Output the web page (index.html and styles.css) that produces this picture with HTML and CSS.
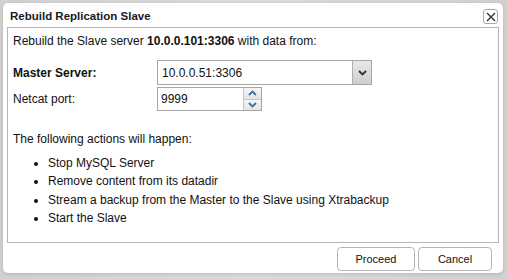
FILE: index.html
```html
<!DOCTYPE html>
<html>
<head>
    <meta name="viewport" content="width=device-width, initial-scale=1.0">
    <title>Rebuild Replication Slave</title>
    <link rel="stylesheet" href="styles.css">
</head>
<body>
    <div class="dialog">
        <div class="titlebar">
            <span class="title">Rebuild Replication Slave</span>
            <span class="close">
                <svg width="10" height="10" viewBox="0 0 10 10">
                    <path d="M1 1 L9 9 M9 1 L1 9" stroke="#333" stroke-width="1.4"/>
                </svg>
            </span>
        </div>

        <!-- main content box -->
        <div class="content">
            <p class="intro">Rebuild the Slave server <b>10.0.0.101:3306</b> with data from:</p>

            <div class="row first">
                <label class="lbl bold">Master Server:</label>
                <div class="select">
                    <span class="select-value">10.0.0.51:3306</span>
                    <span class="select-arrow">
                        <svg width="9" height="6" viewBox="0 0 9 6">
                            <path d="M1 1 L4.5 4.5 L8 1" fill="none" stroke="#333" stroke-width="1.8"/>
                        </svg>
                    </span>
                </div>
            </div>
            <div class="row">
                <label class="lbl">Netcat port:</label>
                <div class="spin">
                    <span class="spin-value">9999</span>
                    <span class="spin-btns">
                        <span class="spin-btn">
                            <svg width="9" height="6" viewBox="0 0 9 6">
                                <path d="M1 5 L4.5 1.5 L8 5" fill="none" stroke="#3a6fa8" stroke-width="1.8"/>
                            </svg>
                        </span>
                        <span class="spin-btn">
                            <svg width="9" height="6" viewBox="0 0 9 6">
                                <path d="M1 1 L4.5 4.5 L8 1" fill="none" stroke="#3a6fa8" stroke-width="1.8"/>
                            </svg>
                        </span>
                    </span>
                </div>
            </div>

            <p class="actions">The following actions will happen:</p>
            <ul class="steps">
                <li>Stop MySQL Server</li>
                <li>Remove content from its datadir</li>
                <li>Stream a backup from the Master to the Slave using Xtrabackup</li>
                <li>Start the Slave</li>
            </ul>
        </div>

        <div class="buttons">
            <button class="btn">Proceed</button>
            <button class="btn">Cancel</button>
        </div>
    </div>
</body>
</html>
```

FILE: styles.css
```css
* {
    margin: 0;
    padding: 0;
    box-sizing: border-box;
}
body {
    background: linear-gradient(90deg, #d2d2d2, #dcdcdc 50%, #d2d2d2);
    font-family: "Liberation Sans", Arial, sans-serif;
    font-size: 12px;
    color: #111;
    height: 279px;
    overflow: hidden;
}
.dialog {
    margin: 3px 4px 0 3px;
    height: 270px;
    background: #fff;
    border-radius: 5px;
    box-shadow: 0 1px 4px rgba(0, 0, 0, 0.15);
    display: flex;
    flex-direction: column;
    padding: 0 4px;
}
.titlebar {
    height: 24px;
    display: flex;
    align-items: center;
    justify-content: space-between;
    padding: 1px 0 0 3px;
}
.title {
    font-weight: bold;
    font-size: 11.5px;
    color: #1a1a1a;
}
.close {
    width: 15px;
    height: 15px;
    border: 1px solid #aaa;
    border-radius: 3px;
    display: flex;
    align-items: center;
    justify-content: center;
    margin: 2px 1px 0 0;
}
.content {
    border: 1px solid #bcb3b3;
    height: 216px;
    padding: 5px 5px 0 5px;
}
.intro {
    line-height: 16px;
}
.row {
    display: flex;
    align-items: center;
    margin-top: 2px;
}
.row.first {
    margin-top: 11px;
}
.lbl {
    width: 144px;
}
.bold {
    font-weight: bold;
}
.select {
    width: 215px;
    height: 25px;
    border: 1px solid #a6a6a6;
    display: flex;
    align-items: center;
}
.select-value {
    flex: 1;
    padding-left: 4px;
}
.select-arrow {
    width: 19px;
    height: 100%;
    background: linear-gradient(#e8e8e8, #cfcfcf);
    border-left: 1px solid #b0b0b0;
    display: flex;
    align-items: center;
    justify-content: center;
}
.spin {
    width: 105px;
    height: 24px;
    border: 1px solid #a6a6a6;
    display: flex;
    align-items: center;
}
.spin-value {
    flex: 1;
    padding-left: 3px;
}
.spin-btns {
    width: 18px;
    height: 100%;
    border-left: 1px solid #c4c4c4;
    display: flex;
    flex-direction: column;
}
.spin-btn {
    flex: 1;
    display: flex;
    align-items: center;
    justify-content: center;
    background: linear-gradient(#f6f6f6, #e4e4e4);
}
.spin-btn + .spin-btn {
    border-top: 1px solid #c4c4c4;
}
.actions {
    margin-top: 20px;
    line-height: 16px;
}
.steps {
    margin-top: 7px;
    padding-left: 35px;
    line-height: 18.3px;
}
.buttons {
    display: flex;
    justify-content: flex-end;
    gap: 3px;
    padding: 4px 7px 0 0;
}
.btn {
    width: 78px;
    height: 24px;
    background: #fff;
    border: 1px solid #b5b5b5;
    border-radius: 4px;
    font-family: "Liberation Sans", Arial, sans-serif;
    font-size: 11px;
    color: #111;
}
.btn + .btn {
    width: 74px;
}
```
